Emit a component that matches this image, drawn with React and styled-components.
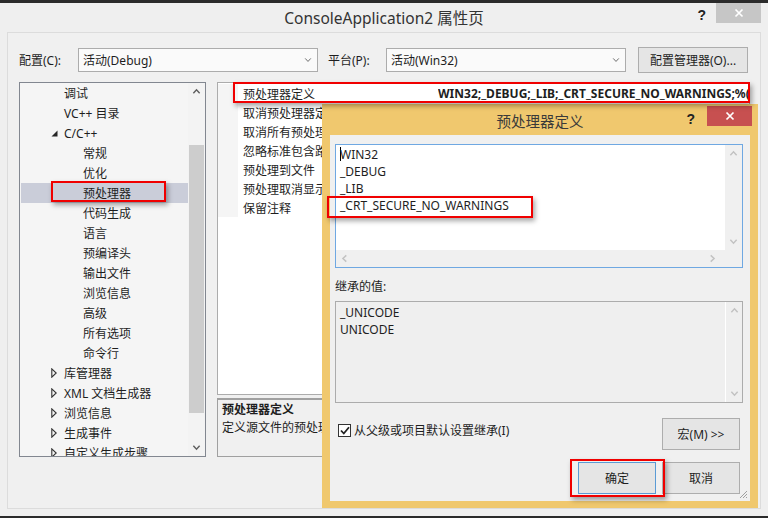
import styled, { createGlobalStyle } from "styled-components";

const GlobalStyle = createGlobalStyle`
  html, body {
    margin: 0;
    padding: 0;
    background: #2b2b2b;
  }
  body {
    font-family: "Noto Sans", "Noto Sans CJK SC", sans-serif;
    font-size: 12px;
    color: #1e1e1e;
  }
  * {
    box-sizing: border-box;
  }
`;

const Screen = styled.div`
  position: relative;
  width: 768px;
  height: 518px;
  overflow: hidden;
  background: #2b2b2b;
  padding: 3px 0 2px;
`;

const Window = styled.div`
  height: 100%;
  background: #efefef;
  display: flex;
  flex-direction: column;
`;

const TitleBar = styled.div`
  position: relative;
  height: 29px;
  display: flex;
  align-items: center;
  justify-content: center;
  font-size: 15.5px;
  color: #333;
`;

const HelpMark = styled.span`
  position: absolute;
  top: ${(p) => p.$top}px;
  right: ${(p) => p.$right}px;
  font-family: "Liberation Sans", sans-serif;
  font-weight: bold;
  font-size: 14px;
  color: #222;
`;

const CloseButton = styled.div`
  position: absolute;
  top: ${(p) => p.$top}px;
  right: ${(p) => p.$right}px;
  width: 45px;
  height: 20px;
  display: flex;
  align-items: center;
  justify-content: center;
  background: ${(p) => (p.$active ? "#c75050" : "#c6c6c6")};
`;

const Frame = styled.div`
  flex: 1;
  margin: 0 7px 7px;
  border: 1px solid #dcdcdc;
  background: #f0f0f0;
  padding: 14px 10px 0 11px;
  display: flex;
  flex-direction: column;
`;

const ConfigRow = styled.div`
  height: 26px;
  display: flex;
  align-items: center;
`;

const FieldLabel = styled.span`
  width: ${(p) => p.$width}px;
  white-space: nowrap;
`;

const Combo = styled.div`
  width: 240px;
  height: 24px;
  border: 1px solid #acacac;
  background: #fafafa;
  display: flex;
  align-items: center;
  justify-content: space-between;
  padding: 0 5px 0 4px;
  margin-right: ${(p) => p.$gap || 0}px;
`;

const Button = styled.div`
  flex-shrink: 0;
  width: ${(p) => p.$width}px;
  height: ${(p) => p.$height || 26}px;
  border: 1px solid ${(p) => (p.$default ? "#5b9bd5" : "#adadad")};
  background: #e5e5e5;
  display: flex;
  align-items: center;
  justify-content: center;
  white-space: nowrap;
`;

const Panels = styled.div`
  margin-top: 9px;
  display: flex;
  gap: 11px;
  height: 375px;
`;

const Tree = styled.div`
  flex-shrink: 0;
  width: 187px;
  border: 1px solid #828790;
  background: #f5f5f5;
  display: flex;
`;

const TreeList = styled.div`
  flex: 1;
  overflow: hidden;
  padding-left: 1px;
`;

const TreeRow = styled.div`
  height: 20px;
  display: flex;
  align-items: center;
  white-space: nowrap;
  padding-left: ${(p) => 30 + (p.$level - 1) * 19}px;
  background: ${(p) => (p.$selected ? "#cacdd9" : "transparent")};
`;

const ArrowSlot = styled.span`
  width: 13px;
  display: flex;
  align-items: center;
`;

const ScrollBar = styled.div`
  width: 17px;
  display: flex;
  flex-direction: column;
  background: ${(p) => p.$bg || "#f0f0f0"};
  border-left: ${(p) => (p.$divider ? "1px solid #ffffff" : "none")};
`;

const ScrollButton = styled.div`
  height: 17px;
  display: flex;
  align-items: center;
  justify-content: center;
`;

const ScrollTrack = styled.div`
  flex: 1;
  display: flex;
  flex-direction: column;
  align-items: center;
`;

const Thumb = styled.div`
  width: 15px;
  margin-top: ${(p) => p.$offset}px;
  height: ${(p) => p.$size}px;
  background: #cdcdcd;
`;

const RightColumn = styled.div`
  flex: 1;
  min-width: 0;
  display: flex;
  flex-direction: column;
  gap: 3px;
`;

const Grid = styled.div`
  height: 313px;
  border: 1px solid #acacac;
  background: #ffffff;
  padding-top: 1px;
`;

const GridRow = styled.div`
  height: 19px;
  display: flex;
  align-items: center;
  white-space: nowrap;
`;

const Gutter = styled.div`
  flex-shrink: 0;
  width: 20px;
  height: 100%;
  background: #f5f5f5;
`;

const PropName = styled.div`
  flex-shrink: 0;
  width: 200px;
  padding-left: 5px;
  overflow: hidden;
`;

const PropValue = styled.div`
  flex: 1;
  min-width: 0;
  overflow: hidden;
  font-weight: bold;
  padding-right: 2px;
`;

const Description = styled.div`
  flex: 1;
  border: 1px solid #a0a0a0;
  border-top-width: 2px;
  background: #f0f0f0;
  padding: 1px 4px;
  line-height: 18px;
`;

const DescTitle = styled.div`
  font-weight: bold;
`;

/* dialog */

const Dialog = styled.div`
  position: absolute;
  left: 322px;
  top: 104px;
  width: 436px;
  height: 404px;
  background: #f0c86e;
  padding: 0 8px 7px;
  display: flex;
  flex-direction: column;
`;

const DialogTitle = styled.div`
  position: relative;
  height: 31px;
  display: flex;
  align-items: center;
  justify-content: center;
  font-size: 14.5px;
  color: #3a3a3a;
  padding-top: 2px;
`;

const DialogBody = styled.div`
  position: relative;
  flex: 1;
  background: #f0f0f0;
  padding: 9px 7px 0 5px;
  display: flex;
  flex-direction: column;
`;

const EditBox = styled.div`
  height: 124px;
  border: 1px solid #6fa8e2;
  display: grid;
  grid-template-columns: 1fr 17px;
  grid-template-rows: 1fr 17px;
`;

const EditText = styled.div`
  background: #ffffff;
  padding: 1px 4px;
  line-height: 17px;
`;

const Caret = styled.span`
  display: inline-block;
  width: 1px;
  height: 14px;
  background: #000;
  vertical-align: -2px;
  margin-right: -1px;
`;

const HScroll = styled.div`
  grid-column: 1 / 3;
  background: #f0f0f0;
  display: flex;
  align-items: center;
  justify-content: space-between;
  padding: 0 25px 0 4px;
`;

const SectionLabel = styled.div`
  margin-top: 11px;
  line-height: 16px;
`;

const InheritBox = styled.div`
  margin-top: 6px;
  height: 102px;
  border: 1px solid #acacac;
  background: #efefef;
  display: flex;
`;

const InheritText = styled.div`
  flex: 1;
  padding: 2px 4px;
  line-height: 17px;
`;

const CheckRow = styled.div`
  margin-top: 15px;
  padding: 0 3px 0 3px;
  height: 32px;
  display: flex;
  align-items: center;
  justify-content: space-between;
`;

const CheckLabel = styled.label`
  display: flex;
  align-items: center;
  gap: 3px;
  margin-top: -8px;
`;

const CheckBox = styled.span`
  width: 13px;
  height: 13px;
  border: 1px solid #333;
  background: #fff;
  display: flex;
  align-items: center;
  justify-content: center;
`;

const ButtonRow = styled.div`
  margin-top: 12px;
  padding-right: 3px;
  display: flex;
  justify-content: flex-end;
  gap: 6px;
`;

const Grip = styled.svg`
  position: absolute;
  right: 2px;
  bottom: 2px;
`;

const Highlight = styled.div`
  position: absolute;
  left: ${(p) => p.$x}px;
  top: ${(p) => p.$y}px;
  width: ${(p) => p.$w}px;
  height: ${(p) => p.$h}px;
  border: 2px solid #f00000;
  box-shadow: 2px 3px 5px rgba(0, 0, 0, 0.35);
  pointer-events: none;
`;

const ChevronSvg = styled.svg`
  transform: rotate(${(p) => p.$rot}deg);
`;

function Chevron({ dir = "down", color = "#a6a6a6", size = 9, weight = 1.6 }) {
  const rot = { down: 0, up: 180, left: 90, right: -90 }[dir];
  return (
    <ChevronSvg $rot={rot} width={size} height={size} viewBox="0 0 10 10">
      <path d="M1.5 3 L5 6.8 L8.5 3" fill="none" stroke={color} strokeWidth={weight} />
    </ChevronSvg>
  );
}

function TreeArrow({ open }) {
  return open ? (
    <svg width="7" height="7" viewBox="0 0 7 7">
      <path d="M6.5 0.5 L6.5 6.5 L0.5 6.5 Z" fill="#262626" />
    </svg>
  ) : (
    <svg width="6" height="10" viewBox="0 0 6 10">
      <path d="M0.8 0.8 L5.2 5 L0.8 9.2 Z" fill="none" stroke="#333" strokeWidth="1.1" />
    </svg>
  );
}

function CloseX({ color = "#fff" }) {
  return (
    <svg width="10" height="10" viewBox="0 0 10 10">
      <path d="M1.5 1.5 L8.5 8.5 M8.5 1.5 L1.5 8.5" stroke={color} strokeWidth="1.7" />
    </svg>
  );
}

const treeItems = [
  { label: "调试", level: 1 },
  { label: "VC++ 目录", level: 1 },
  { label: "C/C++", level: 1, arrow: "open" },
  { label: "常规", level: 2 },
  { label: "优化", level: 2 },
  { label: "预处理器", level: 2, selected: true },
  { label: "代码生成", level: 2 },
  { label: "语言", level: 2 },
  { label: "预编译头", level: 2 },
  { label: "输出文件", level: 2 },
  { label: "浏览信息", level: 2 },
  { label: "高级", level: 2 },
  { label: "所有选项", level: 2 },
  { label: "命令行", level: 2 },
  { label: "库管理器", level: 1, arrow: "closed" },
  { label: "XML 文档生成器", level: 1, arrow: "closed" },
  { label: "浏览信息", level: 1, arrow: "closed" },
  { label: "生成事件", level: 1, arrow: "closed" },
  { label: "自定义生成步骤", level: 1, arrow: "closed" },
];

const properties = [
  { name: "预处理器定义", value: "WIN32;_DEBUG;_LIB;_CRT_SECURE_NO_WARNINGS;%(PreprocessorDefinitions)" },
  { name: "取消预处理器定义", value: "" },
  { name: "取消所有预处理器定义", value: "否" },
  { name: "忽略标准包含路径", value: "否" },
  { name: "预处理到文件", value: "否" },
  { name: "预处理取消显示行号", value: "否" },
  { name: "保留注释", value: "否" },
];

const definitions = ["WIN32", "_DEBUG", "_LIB", "_CRT_SECURE_NO_WARNINGS"];
const inherited = ["_UNICODE", "UNICODE"];

export default function App() {
  return (
    <>
      <GlobalStyle />
      <Screen>
        <Window>
          <TitleBar>
            ConsoleApplication2 属性页
            <HelpMark $top={4} $right={62}>?</HelpMark>
            <CloseButton $top={0} $right={7}>
              <CloseX />
            </CloseButton>
          </TitleBar>

          <Frame>
            <ConfigRow>
              <FieldLabel $width={59}>配置(C):</FieldLabel>
              <Combo $gap={10}>
                活动(Debug)
                <Chevron color="#666" size={8} weight={1.2} />
              </Combo>
              <FieldLabel $width={58}>平台(P):</FieldLabel>
              <Combo $gap={12}>
                活动(Win32)
                <Chevron color="#666" size={8} weight={1.2} />
              </Combo>
              <Button $width={110}>配置管理器(O)...</Button>
            </ConfigRow>

            <Panels>
              <Tree>
                <TreeList>
                  {treeItems.map((item, i) => (
                    <TreeRow key={i} $level={item.level} $selected={item.selected}>
                      <ArrowSlot>
                        {item.arrow && <TreeArrow open={item.arrow === "open"} />}
                      </ArrowSlot>
                      {item.label}
                    </TreeRow>
                  ))}
                </TreeList>
                <ScrollBar $bg="#f3f3f3">
                  <ScrollButton>
                    <Chevron dir="up" color="#606060" size={9} />
                  </ScrollButton>
                  <ScrollTrack>
                    <Thumb $offset={45} $size={268} />
                  </ScrollTrack>
                  <ScrollButton>
                    <Chevron dir="down" color="#606060" size={9} />
                  </ScrollButton>
                </ScrollBar>
              </Tree>

              <RightColumn>
                <Grid>
                  {properties.map((prop, i) => (
                    <GridRow key={i}>
                      <Gutter />
                      <PropName>{prop.name}</PropName>
                      <PropValue>{i === 0 ? prop.value : ""}</PropValue>
                    </GridRow>
                  ))}
                </Grid>
                <Description>
                  <DescTitle>预处理器定义</DescTitle>
                  定义源文件的预处理器符号。
                </Description>
              </RightColumn>
            </Panels>
          </Frame>
        </Window>

        <Dialog>
          <DialogTitle>
            预处理器定义
            <HelpMark $top={7} $right={55}>?</HelpMark>
            <CloseButton $top={2} $right={-2} $active>
              <CloseX />
            </CloseButton>
          </DialogTitle>

          <DialogBody>
            <EditBox>
              <EditText>
                {definitions.map((d, i) => (
                  <div key={d}>
                    {i === 0 && <Caret />}
                    {d}
                  </div>
                ))}
              </EditText>
              <ScrollBar>
                <ScrollButton>
                  <Chevron dir="up" color="#c2c2c2" />
                </ScrollButton>
                <ScrollTrack />
                <ScrollButton>
                  <Chevron dir="down" color="#c2c2c2" />
                </ScrollButton>
              </ScrollBar>
              <HScroll>
                <Chevron dir="left" color="#c2c2c2" />
                <Chevron dir="right" color="#c2c2c2" />
              </HScroll>
            </EditBox>

            <SectionLabel>继承的值:</SectionLabel>
            <InheritBox>
              <InheritText>
                {inherited.map((d) => (
                  <div key={d}>{d}</div>
                ))}
              </InheritText>
              <ScrollBar $bg="#efefef" $divider>
                <ScrollButton>
                  <Chevron dir="up" color="#c2c2c2" />
                </ScrollButton>
                <ScrollTrack />
                <ScrollButton>
                  <Chevron dir="down" color="#c2c2c2" />
                </ScrollButton>
              </ScrollBar>
            </InheritBox>

            <CheckRow>
              <CheckLabel>
                <CheckBox>
                  <svg width="10" height="9" viewBox="0 0 10 9">
                    <path d="M1 4.5 L3.8 7.5 L9 1.2" fill="none" stroke="#222" strokeWidth="1.8" />
                  </svg>
                </CheckBox>
                从父级或项目默认设置继承(I)
              </CheckLabel>
              <Button $width={78} $height={32}>
                宏(M) &gt;&gt;
              </Button>
            </CheckRow>

            <ButtonRow>
              <Button $width={78} $height={32} $default>
                确定
              </Button>
              <Button $width={78} $height={32}>
                取消
              </Button>
            </ButtonRow>

            <Grip width="9" height="9" viewBox="0 0 9 9">
              <path d="M8 1 L1 8 M8 4 L4 8 M8 7 L7 8" stroke="#a0a0a0" strokeWidth="1" />
            </Grip>
          </DialogBody>
        </Dialog>

        <Highlight $x={51} $y={181} $w={115} $h={21} />
        <Highlight $x={233} $y={82} $w={517} $h={21} />
        <Highlight $x={327} $y={196} $w={206} $h={22} />
        <Highlight $x={570} $y={459} $w={95} $h={38} />
      </Screen>
    </>
  );
}
